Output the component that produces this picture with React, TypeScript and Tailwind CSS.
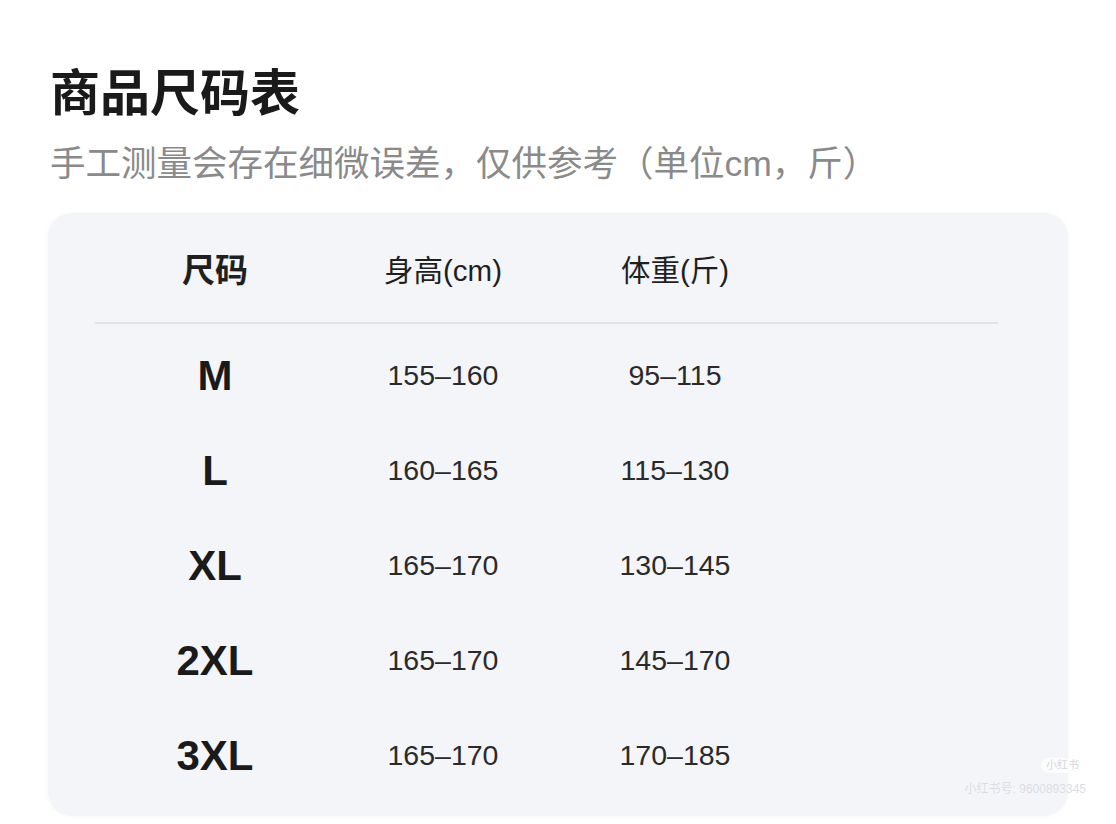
const sizes = [
  { size: 'M', height: '155–160', weight: '95–115' },
  { size: 'L', height: '160–165', weight: '115–130' },
  { size: 'XL', height: '165–170', weight: '130–145' },
  { size: '2XL', height: '165–170', weight: '145–170' },
  { size: '3XL', height: '165–170', weight: '170–185' },
];

const font = { fontFamily: '"Liberation Sans", "Noto Sans CJK SC", sans-serif' };

function App() {
  return (
    <div className="min-h-[824px] bg-white pl-[48px] pr-[48px] pt-[70px]" style={font}>
      <h1 className="pl-[2px] text-[50px] font-semibold leading-[49px] text-[#1a1a1a]">商品尺码表</h1>
      <p className="mt-[28px] pl-[2px] text-[35.5px] leading-[34px] text-[#8a8a8a]">
        手工测量会存在细微误差，仅供参考（单位cm，斤）
      </p>

      {/* size table card */}
      <div className="relative mt-[32px] w-[1020px] rounded-[24px] bg-[#f4f5f9] pb-[13px] shadow-[0_0_6px_rgba(0,0,0,0.03)]">
        <div className="grid grid-cols-[240px_216px_248px_1fr] pl-[47px] pt-[40px] pb-[33px] text-[#1f1f1f]">
          <div className="text-center text-[33px] font-semibold leading-[36px]">尺码</div>
          <div className="text-center text-[29.5px] leading-[36px]">身高(cm)</div>
          <div className="text-center text-[29.5px] leading-[36px]">体重(斤)</div>
        </div>

        <div className="ml-[47px] mr-[70px] h-[2px] bg-[#e2e3e8]" />

        <div className="pt-[4px]">
          {sizes.map((row) => (
            <div
              key={row.size}
              className="grid h-[95px] grid-cols-[240px_216px_248px_1fr] items-center pl-[47px]"
            >
              <div className="text-center text-[42px] font-bold leading-none text-[#1a1a1a]">{row.size}</div>
              <div className="text-center text-[28.5px] leading-none text-[#2a2a2a]">{row.height}</div>
              <div className="text-center text-[28.5px] leading-none text-[#2a2a2a]">{row.weight}</div>
            </div>
          ))}
        </div>

        {/* faint watermark */}
        <div className="absolute bottom-[43px] right-[-16px] rounded-full bg-white/70 px-[5px] text-[11px] leading-[15px] text-[#d6d7dc]">
          小红书
        </div>
        <div className="absolute bottom-[20px] right-[-18px] text-[12px] leading-[14px] text-[#dcdde2]">
          小红书号: 9600893345
        </div>
      </div>
    </div>
  );
}

export default App;
